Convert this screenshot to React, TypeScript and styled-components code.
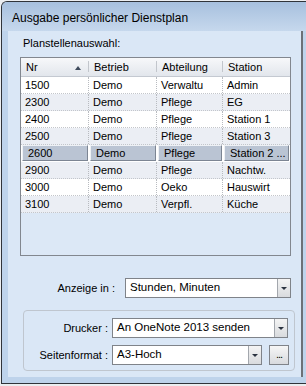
import React from "react";
import styled, { createGlobalStyle } from "styled-components";

type Row = {
  nr: string
  betrieb: string
  abteilung: string
  station: string
}

const rows: Row[] = [
  { nr: "1500", betrieb: "Demo", abteilung: "Verwaltu", station: "Admin" },
  { nr: "2300", betrieb: "Demo", abteilung: "Pflege", station: "EG" },
  { nr: "2400", betrieb: "Demo", abteilung: "Pflege", station: "Station 1" },
  { nr: "2500", betrieb: "Demo", abteilung: "Pflege", station: "Station 3" },
  { nr: "2600", betrieb: "Demo", abteilung: "Pflege", station: "Station 2 ..." },
  { nr: "2900", betrieb: "Demo", abteilung: "Pflege", station: "Nachtw." },
  { nr: "3000", betrieb: "Demo", abteilung: "Oeko", station: "Hauswirt" },
  { nr: "3100", betrieb: "Demo", abteilung: "Verpfl.", station: "Küche" },
]

const SELECTED = 4
const COLS = "68px 68px 66px 1fr"

const GlobalStyle = createGlobalStyle`
  html, body {
    margin: 0;
    padding: 0;
    background: #eceef1;
    overflow: hidden;
  }
  body {
    font-family: "Liberation Sans", Arial, sans-serif;
    color: #000;
  }
`

const Window = styled.div`
  margin: 1px 0 0 1px;
  width: 310px;
  height: 381px;
  border-top: 1px solid #30343a;
  border-left: 1px solid #30343a;
  border-bottom: 1px solid #30343a;
  border-top-left-radius: 6px;
  background: #bed3eb;
  box-shadow: 0 2px 0 #2ba5cb;
  display: flex;
  flex-direction: column;
  overflow: hidden;
`

const TitleBar = styled.div`
  height: 29px;
  flex: none;
  display: flex;
  align-items: center;
  padding: 2px 0 0 10px;
  box-sizing: border-box;
  font-size: 12px;
  background: linear-gradient(#a7c0de, #c6d8ed);
`

const Frame = styled.div`
  flex: 1;
  display: flex;
  padding: 0 0 6px 6px;
`

const Client = styled.div`
  width: 295px;
  border-right: 2px solid #6c7077;
  background: #dae7f6;
  display: flex;
  flex-direction: column;
  padding: 6px 0 0 12px;
  box-sizing: border-box;
`

const Caption = styled.div`
  font-size: 11px;
  line-height: 13px;
  margin: 0 0 7px 3px;
`

const Table = styled.div`
  width: 271px;
  height: 199px;
  box-sizing: border-box;
  border: 1px solid #82878f;
  background: #dce8f6;
  display: flex;
  flex-direction: column;
`

const HeaderRow = styled.div`
  display: grid;
  grid-template-columns: ${COLS};
  height: 19px;
  box-sizing: border-box;
  border-bottom: 1px solid #c4c9d1;
  background: linear-gradient(#f7f8fa, #e2e6ec);
`

const HeaderCell = styled.div<{ $last?: boolean }>`
  position: relative;
  display: flex;
  align-items: center;
  padding-left: 5px;
  font-size: 11px;
  &::after {
    content: "";
    display: ${p => (p.$last ? "none" : "block")};
    position: absolute;
    right: 0;
    top: 3px;
    bottom: 4px;
    width: 1px;
    background: #c2c6cc;
  }
`

const SortArrow = styled.span`
  position: absolute;
  right: 8px;
  top: 8px;
  width: 0;
  height: 0;
  border-left: 3px solid transparent;
  border-right: 3px solid transparent;
  border-bottom: 4px solid #3e4a5c;
`

const DataRow = styled.div<{ $odd: boolean }>`
  display: grid;
  grid-template-columns: ${COLS};
  height: 17px;
  box-sizing: border-box;
  border-bottom: 1px dotted #c3c6cb;
  background: ${p => (p.$odd ? "#ebeef4" : "#ffffff")};
`

const Cell = styled.div<{ $last?: boolean }>`
  display: flex;
  align-items: center;
  padding-left: 4px;
  font-size: 11px;
  white-space: nowrap;
  overflow: hidden;
  border-right: ${p => (p.$last ? "none" : "1px dotted #b8bbc0")};
`

const SelectedCell = styled.div`
  display: flex;
  align-items: center;
  margin: 0 1px 0 1px;
  padding-left: 5px;
  font-size: 11px;
  white-space: nowrap;
  overflow: hidden;
  background: #bac4d3;
  border: 1px solid;
  border-color: #eef1f5 #7c8593 #7c8593 #eef1f5;
`

const SelectedRow = styled.div`
  display: grid;
  grid-template-columns: ${COLS};
  height: 17px;
  box-sizing: border-box;
  background: #ffffff;
  padding-bottom: 1px;
`

const FieldRow = styled.div`
  display: flex;
  align-items: center;
  margin-top: 22px;
  width: 271px;
`

const Label = styled.div`
  flex: 1;
  text-align: right;
  padding-right: 10px;
  font-size: 11px;
`

const Combo = styled.div<{ $width: number }>`
  width: ${p => p.$width}px;
  height: 20px;
  box-sizing: border-box;
  border: 1px solid #7f8389;
  background: #fff;
  display: flex;
  align-items: stretch;
  flex: none;
`

const ComboText = styled.div`
  flex: 1;
  display: flex;
  align-items: center;
  padding: 0 0 2px 4px;
  font-size: 11.5px;
  white-space: nowrap;
  overflow: hidden;
`

const ComboButton = styled.div`
  width: 12px;
  border-left: 1px solid #a3a7ad;
  background: linear-gradient(#f4f4f4, #d9dbde);
  display: flex;
  align-items: center;
  justify-content: center;
  &::before {
    content: "";
    width: 0;
    height: 0;
    border-left: 3px solid transparent;
    border-right: 3px solid transparent;
    border-top: 3px solid #2b3340;
  }
`

const GroupBox = styled.fieldset`
  margin: 12px 0 0 3px;
  width: 271px;
  height: 61px;
  box-sizing: border-box;
  border: 1px solid #bfc6cf;
  border-radius: 4px;
  padding: 7px 5px 0 0;
  display: grid;
  grid-template-columns: 84px auto;
  column-gap: 4px;
  row-gap: 7px;
  align-content: start;
`

const GroupLabel = styled.div`
  font-size: 11px;
  text-align: right;
  align-self: center;
`

const InlineFields = styled.div`
  display: flex;
  gap: 7px;
`

const DotsButton = styled.div`
  width: 20px;
  height: 20px;
  box-sizing: border-box;
  border: 1px solid #7f8389;
  background: linear-gradient(#f6f6f6, #d8dade);
  font-size: 11px;
  line-height: 16px;
  text-align: center;
  letter-spacing: -1px;
`

function Combobox({ text, width }: { text: string; width: number }) {
  return (
    <Combo $width={width}>
      <ComboText>{text}</ComboText>
      <ComboButton />
    </Combo>
  )
}

export default function App() {
  return (
    <>
      <GlobalStyle />
      <Window>
        <TitleBar>Ausgabe persönlicher Dienstplan</TitleBar>
        <Frame>
          <Client>
            <Caption>Planstellenauswahl:</Caption>
            <Table>
              <HeaderRow>
                <HeaderCell>Nr<SortArrow /></HeaderCell>
                <HeaderCell>Betrieb</HeaderCell>
                <HeaderCell>Abteilung</HeaderCell>
                <HeaderCell $last>Station</HeaderCell>
              </HeaderRow>
              {rows.map((r, i) =>
                i === SELECTED ? (
                  <SelectedRow key={r.nr}>
                    <SelectedCell>{r.nr}</SelectedCell>
                    <SelectedCell>{r.betrieb}</SelectedCell>
                    <SelectedCell>{r.abteilung}</SelectedCell>
                    <SelectedCell>{r.station}</SelectedCell>
                  </SelectedRow>
                ) : (
                  <DataRow key={r.nr} $odd={i % 2 === 1}>
                    <Cell>{r.nr}</Cell>
                    <Cell>{r.betrieb}</Cell>
                    <Cell>{r.abteilung}</Cell>
                    <Cell $last>{r.station}</Cell>
                  </DataRow>
                )
              )}
            </Table>

            <FieldRow>
              <Label>Anzeige in :</Label>
              <Combobox text="Stunden, Minuten" width={166} />
            </FieldRow>

            <GroupBox>
              <GroupLabel>Drucker :</GroupLabel>
              <Combobox text="An OneNote 2013 senden" width={176} />
              <GroupLabel>Seitenformat :</GroupLabel>
              <InlineFields>
                <Combobox text="A3-Hoch" width={150} />
                <DotsButton>...</DotsButton>
              </InlineFields>
            </GroupBox>
          </Client>
        </Frame>
      </Window>
    </>
  )
}
